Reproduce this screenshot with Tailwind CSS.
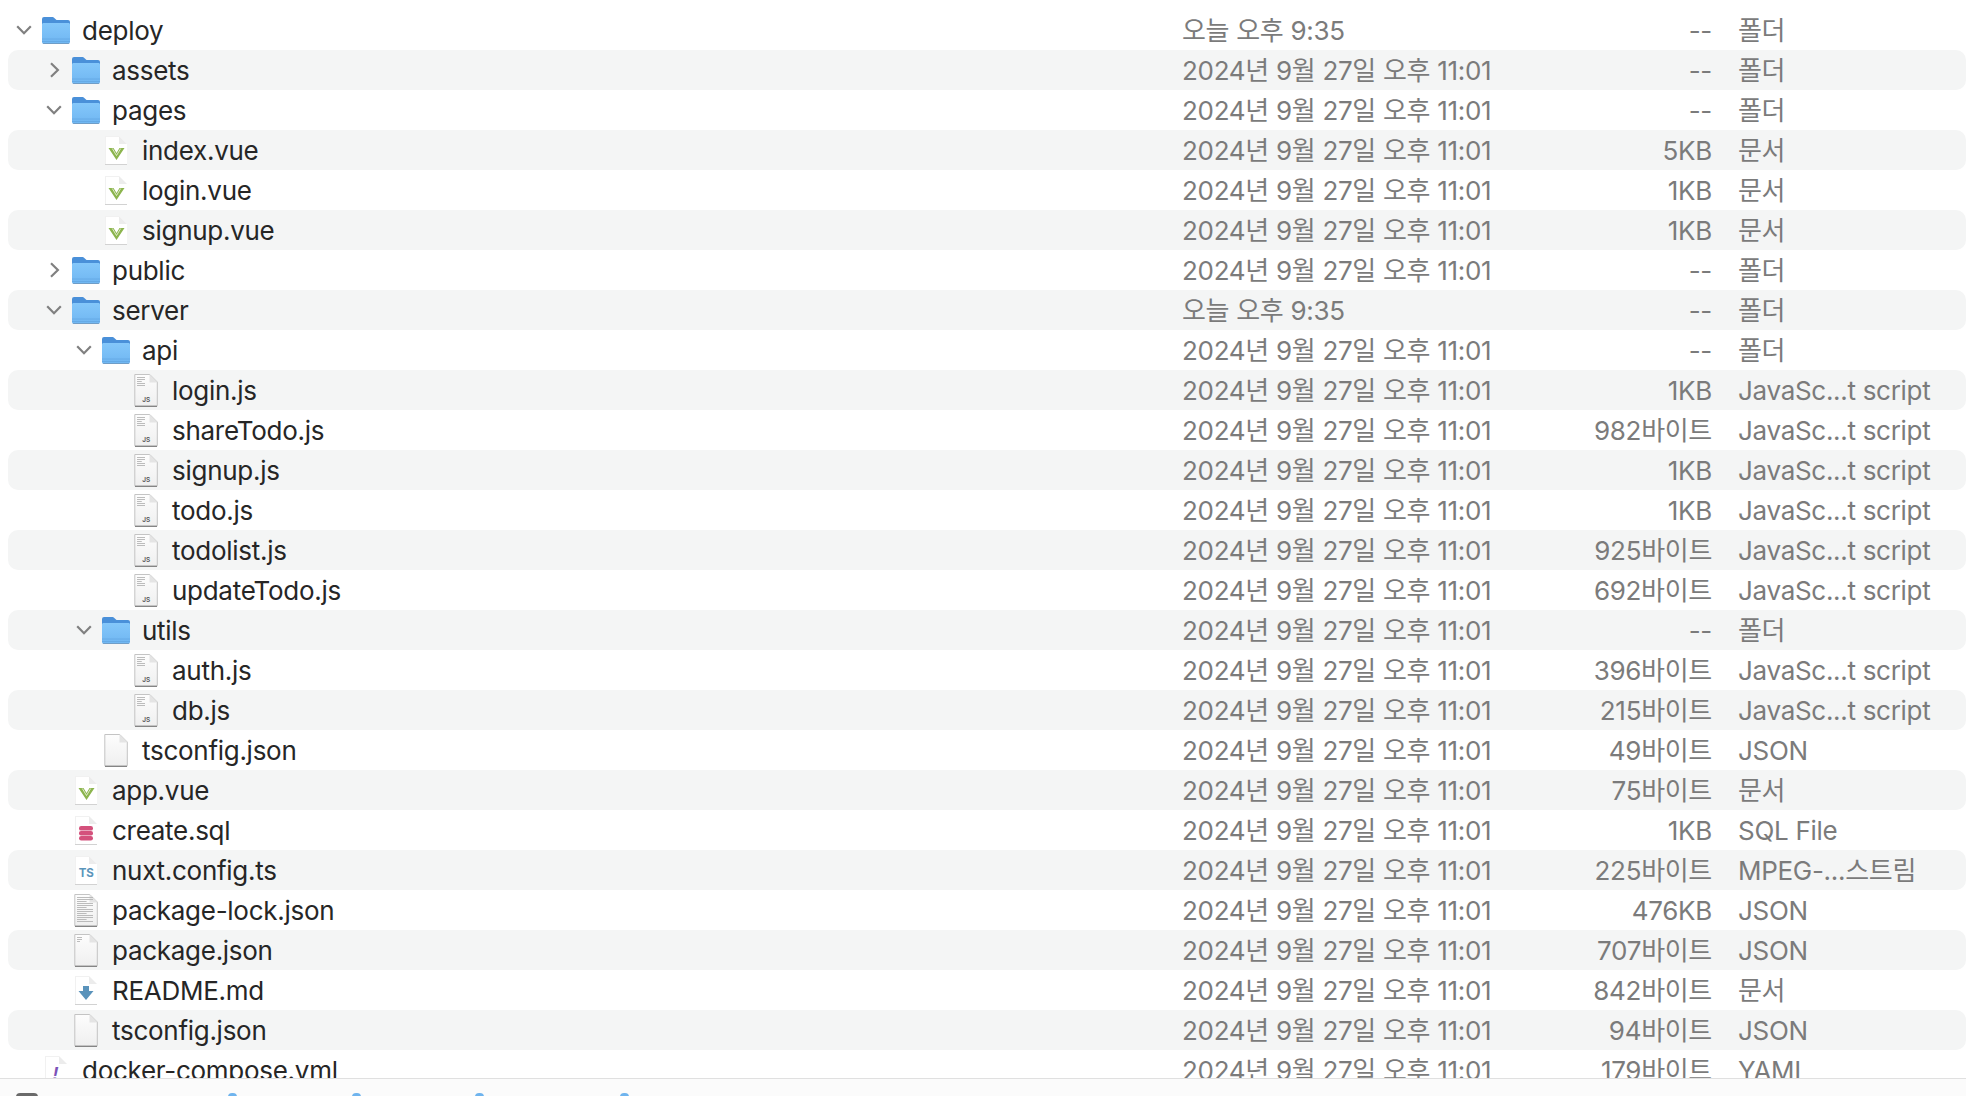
<!DOCTYPE html>
<html lang="ko">
<head>
    <meta charset="UTF-8">
    <meta name="viewport" content="width=device-width, initial-scale=1.0">
    <title>deploy</title>
    <script src="https://cdn.jsdelivr.net/npm/@tailwindcss/browser@4"></script>
</head>
<body class="bg-white h-[1096px] overflow-hidden flex flex-col font-['Inter','Noto_Sans_CJK_KR',sans-serif]">

    <div id="list" class="h-[1078px] overflow-hidden pt-[10px] shrink-0"></div>

    <div class="h-[18px] border-t border-[#e0e0e0] bg-[#fbfbfb] overflow-hidden flex items-start pt-[14px] pl-4">
        <span class="w-[22px] h-1 bg-[#6a6a6a] rounded-t-sm"></span>
        <span class="w-[9px] h-1 bg-[#6fb4ee] rounded-t-sm ml-[190px]"></span>
        <span class="w-[9px] h-1 bg-[#6fb4ee] rounded-t-sm ml-[115px]"></span>
        <span class="w-[9px] h-1 bg-[#6fb4ee] rounded-t-sm ml-[114px]"></span>
        <span class="w-[9px] h-1 bg-[#6fb4ee] rounded-t-sm ml-[136px]"></span>
    </div>

    <script>
        const OLD = "2024년 9월 27일 오후 11:01";
        const TODAY = "오늘 오후 9:35";
        const JS_KIND = "JavaSc...t script";

        // name, level, icon, date, size, kind, chevron
        const rows = [
            ["deploy", 0, "folder", TODAY, "--", "폴더", "down"],
            ["assets", 1, "folder", OLD, "--", "폴더", "right"],
            ["pages", 1, "folder", OLD, "--", "폴더", "down"],
            ["index.vue", 2, "vue", OLD, "5KB", "문서"],
            ["login.vue", 2, "vue", OLD, "1KB", "문서"],
            ["signup.vue", 2, "vue", OLD, "1KB", "문서"],
            ["public", 1, "folder", OLD, "--", "폴더", "right"],
            ["server", 1, "folder", TODAY, "--", "폴더", "down"],
            ["api", 2, "folder", OLD, "--", "폴더", "down"],
            ["login.js", 3, "js", OLD, "1KB", JS_KIND],
            ["shareTodo.js", 3, "js", OLD, "982바이트", JS_KIND],
            ["signup.js", 3, "js", OLD, "1KB", JS_KIND],
            ["todo.js", 3, "js", OLD, "1KB", JS_KIND],
            ["todolist.js", 3, "js", OLD, "925바이트", JS_KIND],
            ["updateTodo.js", 3, "js", OLD, "692바이트", JS_KIND],
            ["utils", 2, "folder", OLD, "--", "폴더", "down"],
            ["auth.js", 3, "js", OLD, "396바이트", JS_KIND],
            ["db.js", 3, "js", OLD, "215바이트", JS_KIND],
            ["tsconfig.json", 2, "blank", OLD, "49바이트", "JSON"],
            ["app.vue", 1, "vue", OLD, "75바이트", "문서"],
            ["create.sql", 1, "sql", OLD, "1KB", "SQL File"],
            ["nuxt.config.ts", 1, "ts", OLD, "225바이트", "MPEG-...스트림"],
            ["package-lock.json", 1, "lock", OLD, "476KB", "JSON"],
            ["package.json", 1, "pkg", OLD, "707바이트", "JSON"],
            ["README.md", 1, "md", OLD, "842바이트", "문서"],
            ["tsconfig.json", 1, "blank", OLD, "94바이트", "JSON"],
            ["docker-compose.yml", 0, "yaml", OLD, "179바이트", "YAML"],
        ];

        const chevrons = {
            down: `<svg width="16" height="10" viewBox="0 0 16 10" fill="none"><path d="M1.200 1.200L8 8.200l6.800-7" stroke="#808080" stroke-width="2.200"/></svg>`,
            right: `<svg width="16" height="16" viewBox="0 0 16 16" fill="none"><path d="M5 1.200L11.900 8 5 14.800" stroke="#808080" stroke-width="2.200"/></svg>`,
        };

        const folder = `<svg width="28" height="27" viewBox="0 0 28 27">
            <defs><linearGradient id="fb" x1="0" y1="0" x2="0" y2="1"><stop offset="0" stop-color="#84c7fa"/><stop offset="1" stop-color="#6fb6f2"/></linearGradient></defs>
            <path d="M2 0h8c1 0 1.600.3 2.300 1L14.500 3H26a2 2 0 0 1 2 2v8H0V2a2 2 0 0 1 2-2z" fill="#4a90d9"/>
            <path d="M0 7.500c0-1 .8-1.500 1.800-1.500h24.400c1 0 1.800.5 1.800 1.500V25a2 2 0 0 1-2 2H2a2 2 0 0 1-2-2z" fill="url(#fb)"/>
            <path d="M0 22h28M0 24.500h28" stroke="#62a6e2" stroke-width=".8"/>
            <path d="M1 26.800h26" stroke="#6f93b5" stroke-width="1"/>
        </svg>`;

        // white page without a strong outline, used behind the coloured badges
        const softPage = (inner) => `<svg width="22" height="29" viewBox="0 0 22 29">
            <path d="M0 0h14l8 8v21H0z" fill="#fff"/>
            <path d="M14 0l8 8h-8z" fill="#ececec"/>
            <path d="M.5 0v29M0 .5h14" stroke="#f1f1f1"/>
            <path d="M0 28.500h22" stroke="#d2d2d2"/>
            ${inner}
        </svg>`;

        // gray-edged page with a shadow at the foot
        const hardPage = (inner) => `<svg width="24" height="33" viewBox="0 0 24 33">
            <defs><linearGradient id="pg" x1="0" y1="0" x2="0" y2="1"><stop offset="0" stop-color="#fdfdfd"/><stop offset="1" stop-color="#efefef"/></linearGradient></defs>
            <path d="M.8.5h15l7.500 7.500v23.500a1 1 0 0 1-1 1H1.800a1 1 0 0 1-1-1z" fill="url(#pg)" stroke="#c4c4c4"/>
            <path d="M15.500.5l8 8h-8z" fill="#e4e4e4"/>
            <path d="M1 32.300h22" stroke="#858585" stroke-width="1.400"/>
            ${inner}
        </svg>`;

        const lines = (n, w) => Array.from({ length: n }, (_, i) =>
            `<path d="M3 ${3.5 + i * 2}h${i % 3 === 2 ? w * 0.6 : w}" stroke="#b4b4b4" stroke-width=".9"/>`).join("");

        const icons = {
            folder,
            vue: softPage(`<path d="M3.500 12h5l3 5 3-5h5l-8 12z" fill="#8cb54e"/><path d="M7.300 12.500l4.200 7 4.200-7" fill="none" stroke="#e4efd4" stroke-width=".9"/>`),
            sql: softPage(`<rect x="4" y="10" width="14" height="4.600" rx="2.200" fill="#d4517c"/><rect x="4" y="15" width="14" height="4.600" rx="2" fill="#d4517c"/><rect x="4" y="20" width="14" height="4.400" rx="2.200" fill="#d4517c"/>`),
            ts: softPage(`<text x="11.300" y="21" text-anchor="middle" font-family="Inter" font-size="11.500" font-weight="700" fill="#5b95bb">TS</text>`),
            md: softPage(`<path d="M8 10h6v5h4.500L11 24 3.500 15H8z" fill="#5a93bb"/>`),
            yaml: softPage(`<text x="10.500" y="24" text-anchor="middle" font-family="Liberation Sans" font-style="italic" font-size="19" font-weight="700" fill="#7b52b8">!</text>`),
            js: hardPage(lines(5, 8) + `<text x="12.300" y="28" text-anchor="middle" font-family="Inter" font-size="6.500" font-weight="600" fill="#555">JS</text>`),
            lock: hardPage(lines(13, 16)),
            pkg: hardPage(lines(3, 5)),
            blank: hardPage(""),
        };

        document.getElementById("list").innerHTML = rows.map(([name, level, icon, date, size, kind, chev], i) => `
            <div class="h-10 ml-2 flex items-center leading-10 whitespace-nowrap ${i % 2 ? "bg-[#f4f5f5] rounded-[10px]" : ""}">
                <div class="w-[1174px] shrink-0 flex items-center text-[#262626]" style="padding-left:${8 + level * 30}px">
                    <span class="w-4 h-10 flex items-center justify-center shrink-0">${chev ? chevrons[chev] : ""}</span>
                    <span class="w-7 h-10 ml-[10px] flex items-center justify-center shrink-0">${icons[icon]}</span>
                    <span class="ml-3 pt-0.5 text-[26px] tracking-[-0.28px]">${name}</span>
                </div>
                <div class="w-[390px] shrink-0 pt-0.5 text-[#7b7b7b] text-[26px] tracking-[-0.3px]">${date}</div>
                <div class="w-[140px] shrink-0 pt-0.5 text-right text-[#7b7b7b] text-[26px] tracking-[-0.3px]">${size}</div>
                <div class="ml-[26px] pt-0.5 text-[#7b7b7b] text-[26px] tracking-[-0.3px]">${kind}</div>
            </div>`).join("");
    </script>

</body>
</html>
